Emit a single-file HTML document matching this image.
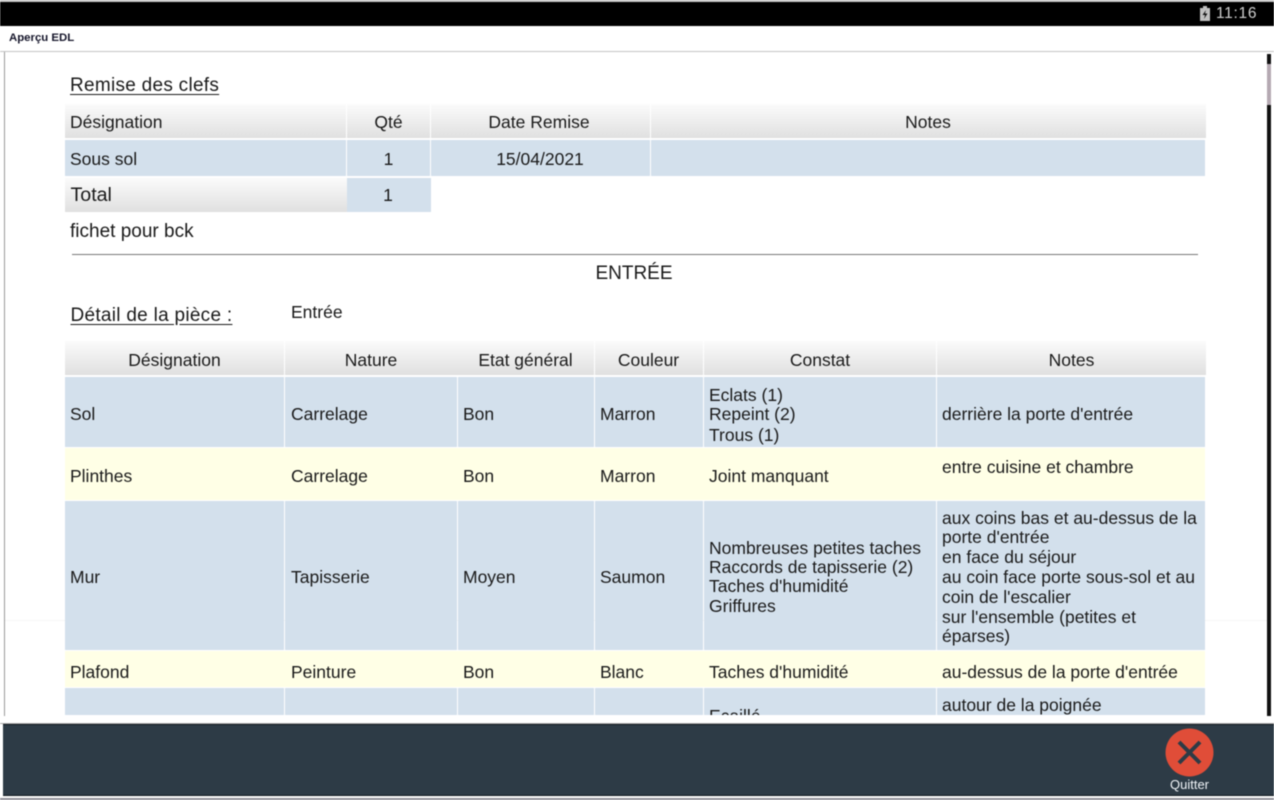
<!DOCTYPE html>
<html lang="fr">
<head>
<meta charset="utf-8">
<title>Aperçu EDL</title>
<style>
html,body{margin:0;padding:0;background:#fff}
#r{position:relative;width:1274px;height:800px;overflow:hidden;background:#fff;font-family:"Liberation Sans",sans-serif;color:#1a1a1a;filter:blur(.4px)}
#r div{position:absolute}
.t{font-size:17.5px;line-height:20px;height:20px;white-space:nowrap}
.c{text-align:center}
.h{background:linear-gradient(#fbfbfb,#e0e0e0)}
.b{background:#d3e0ec}
.y{background:#ffffe6}
.u{text-decoration:underline;text-underline-offset:3px}
</style>
</head>
<body>
<div id="r">
<div style="left:5px;top:620px;width:1262px;height:1px;background:#f6f6f6"></div>
<div style="left:0;top:0;width:1274px;height:2px;background:#c8c8c8"></div>
<div style="left:0;top:2px;width:1274px;height:24px;background:#000"></div>
<svg style="position:absolute;left:1199px;top:6px" width="12" height="15" viewBox="0 0 12 15"><path d="M4 0h4v2h3v13H1V2h3z" fill="#c0c0c0"/><path d="M7 4 3.5 9H6l-1 4 3.5-5.5H6z" fill="#111"/></svg>
<div class="t" style="left:1216px;top:4px;font-size:15.5px;color:#d0d0d0;letter-spacing:.7px">11:16</div>
<div style="left:9px;top:31px;font-size:11.4px;line-height:15px;font-weight:bold;color:#15152a;white-space:nowrap">Aperçu EDL</div>
<div style="left:0;top:51px;width:1274px;height:1px;background:#c4c4c4"></div>
<div style="left:4px;top:52px;width:1px;height:664px;background:#9a9a9a"></div>
<div style="left:1267px;top:54px;width:4px;height:662px;background:#111"></div>
<div style="left:1267px;top:64px;width:4px;height:41px;background:#b5a9b2"></div>

<div class="t u" style="left:70px;top:76px;font-size:19px;letter-spacing:.28px">Remise des clefs</div>

<div class="h" style="left:65px;top:104px;width:281px;height:34px"></div>
<div class="h" style="left:347px;top:104px;width:83px;height:34px"></div>
<div class="h" style="left:431px;top:104px;width:219px;height:34px"></div>
<div class="h" style="left:651px;top:104px;width:555px;height:34px"></div>
<div class="t" style="left:70px;top:112px">Désignation</div>
<div class="t c" style="left:347px;top:112px;width:83px">Qté</div>
<div class="t c" style="left:431px;top:112px;width:216px">Date Remise</div>
<div class="t c" style="left:651px;top:112px;width:554px">Notes</div>

<div class="b" style="left:65px;top:140px;width:281px;height:36px"></div>
<div class="b" style="left:347px;top:140px;width:83px;height:36px"></div>
<div class="b" style="left:431px;top:140px;width:219px;height:36px"></div>
<div class="b" style="left:651px;top:140px;width:554px;height:36px"></div>
<div class="t" style="left:70px;top:149px">Sous sol</div>
<div class="t c" style="left:347px;top:149px;width:83px">1</div>
<div class="t c" style="left:432px;top:149px;width:216px">15/04/2021</div>

<div class="h" style="left:65px;top:178px;width:282px;height:34px"></div>
<div class="b" style="left:347px;top:178px;width:84px;height:34px"></div>
<div class="t" style="left:70.5px;top:185px;font-size:19.6px">Total</div>
<div class="t c" style="left:347px;top:185px;width:82px">1</div>
<div class="t" style="left:70px;top:222px;font-size:19px">fichet pour bck</div>

<div style="left:72px;top:254px;width:1126px;height:1px;background:#777"></div>
<div class="t c" style="left:65px;top:264px;width:1138px;font-size:19px">ENTRÉE</div>
<div class="t u" style="left:70.5px;top:306px;font-size:19px;letter-spacing:.28px">Détail de la pièce :</div>
<div class="t" style="left:291px;top:302px;font-size:17.5px">Entrée</div>

<div class="h" style="left:65px;top:341px;width:219px;height:34px"></div>
<div class="h" style="left:285px;top:341px;width:309px;height:34px"></div>
<div class="h" style="left:595px;top:341px;width:108px;height:34px"></div>
<div class="h" style="left:704px;top:341px;width:232px;height:34px"></div>
<div class="h" style="left:937px;top:341px;width:269px;height:34px"></div>
<div class="t c" style="left:65px;top:350px;width:219px">Désignation</div>
<div class="t c" style="left:285px;top:350px;width:172px">Nature</div>
<div class="t c" style="left:458px;top:350px;width:135px">Etat général</div>
<div class="t c" style="left:595px;top:350px;width:107px">Couleur</div>
<div class="t c" style="left:704px;top:350px;width:232px">Constat</div>
<div class="t c" style="left:938px;top:350px;width:267px">Notes</div>

<!-- row 1 -->
<div class="b" style="left:65px;top:377px;width:219px;height:70px"></div>
<div class="b" style="left:285px;top:377px;width:172px;height:70px"></div>
<div class="b" style="left:458px;top:377px;width:136px;height:70px"></div>
<div class="b" style="left:595px;top:377px;width:108px;height:70px"></div>
<div class="b" style="left:704px;top:377px;width:232px;height:70px"></div>
<div class="b" style="left:937px;top:377px;width:268px;height:70px"></div>
<div class="t" style="left:70px;top:404px">Sol</div>
<div class="t" style="left:291px;top:404px">Carrelage</div>
<div class="t" style="left:463px;top:404px">Bon</div>
<div class="t" style="left:600px;top:404px">Marron</div>
<div class="t" style="left:709px;top:385px">Eclats (1)</div>
<div class="t" style="left:709px;top:404px">Repeint (2)</div>
<div class="t" style="left:709px;top:425px">Trous (1)</div>
<div class="t" style="left:942px;top:404px">derrière la porte d'entrée</div>

<!-- row 2 -->
<div class="y" style="left:65px;top:448px;width:1140px;height:52px"></div>
<div class="t" style="left:70px;top:466px">Plinthes</div>
<div class="t" style="left:291px;top:466px">Carrelage</div>
<div class="t" style="left:463px;top:466px">Bon</div>
<div class="t" style="left:600px;top:466px">Marron</div>
<div class="t" style="left:709px;top:466px">Joint manquant</div>
<div class="t" style="left:942px;top:457px">entre cuisine et chambre</div>

<!-- row 3 -->
<div class="b" style="left:65px;top:501px;width:219px;height:149px"></div>
<div class="b" style="left:285px;top:501px;width:172px;height:149px"></div>
<div class="b" style="left:458px;top:501px;width:136px;height:149px"></div>
<div class="b" style="left:595px;top:501px;width:108px;height:149px"></div>
<div class="b" style="left:704px;top:501px;width:232px;height:149px"></div>
<div class="b" style="left:937px;top:501px;width:268px;height:149px"></div>
<div class="t" style="left:70px;top:567px">Mur</div>
<div class="t" style="left:291px;top:567px">Tapisserie</div>
<div class="t" style="left:463px;top:567px">Moyen</div>
<div class="t" style="left:600px;top:567px">Saumon</div>
<div class="t" style="left:709px;top:538px">Nombreuses petites taches</div>
<div class="t" style="left:709px;top:557px">Raccords de tapisserie (2)</div>
<div class="t" style="left:709px;top:576px">Taches d'humidité</div>
<div class="t" style="left:709px;top:596px">Griffures</div>
<div class="t" style="left:942px;top:508px">aux coins bas et au-dessus de la</div>
<div class="t" style="left:942px;top:527px">porte d'entrée</div>
<div class="t" style="left:942px;top:547px">en face du séjour</div>
<div class="t" style="left:942px;top:567px">au coin face porte sous-sol et au</div>
<div class="t" style="left:942px;top:587px">coin de l'escalier</div>
<div class="t" style="left:942px;top:607px">sur l'ensemble (petites et</div>
<div class="t" style="left:942px;top:626px">éparses)</div>

<!-- row 4 -->
<div class="y" style="left:65px;top:651px;width:1140px;height:36px"></div>
<div class="t" style="left:70px;top:662px">Plafond</div>
<div class="t" style="left:291px;top:662px">Peinture</div>
<div class="t" style="left:463px;top:662px">Bon</div>
<div class="t" style="left:600px;top:662px">Blanc</div>
<div class="t" style="left:709px;top:662px">Taches d'humidité</div>
<div class="t" style="left:942px;top:662px">au-dessus de la porte d'entrée</div>

<!-- row 5 (clipped) -->
<div style="left:0;top:688px;width:1274px;height:27px;overflow:hidden">
<div class="b" style="left:65px;top:0;width:219px;height:27px"></div>
<div class="b" style="left:285px;top:0;width:172px;height:27px"></div>
<div class="b" style="left:458px;top:0;width:136px;height:27px"></div>
<div class="b" style="left:595px;top:0;width:108px;height:27px"></div>
<div class="b" style="left:704px;top:0;width:232px;height:27px"></div>
<div class="b" style="left:937px;top:0;width:268px;height:27px"></div>
<div class="t" style="left:709px;top:18px">Ecaillé</div>
<div class="t" style="left:942px;top:7px">autour de la poignée</div>
</div>

<!-- footer -->
<div style="left:0;top:723px;width:1274px;height:1px;background:#aaa"></div>
<div style="left:3px;top:724px;width:1271px;height:1px;background:#101820"></div>
<div style="left:3px;top:725px;width:1271px;height:70px;background:#2d3b46"></div>
<div style="left:3px;top:795px;width:1271px;height:1px;background:#101820"></div>
<div style="left:0;top:798px;width:1274px;height:2px;background:#8f8f97"></div>
<svg style="position:absolute;left:1165px;top:728px" width="50" height="50" viewBox="0 0 50 50"><circle cx="24.5" cy="24.5" r="24" fill="#e04d38"/><path d="M14 14 35 35M35 14 14 35" stroke="#2d3b46" stroke-width="4" fill="none"/></svg>
<div style="left:1150px;top:777px;width:79px;text-align:center;font-size:13px;line-height:15px;color:#f0f4f8">Quitter</div>
</div>
</body>
</html>
